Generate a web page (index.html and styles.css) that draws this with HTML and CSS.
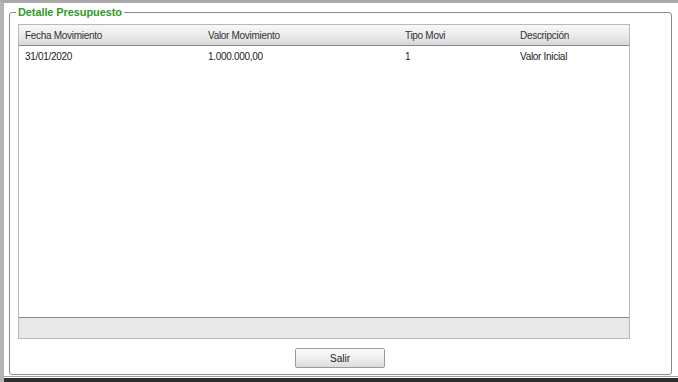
FILE: index.html
```html
<!DOCTYPE html>
<html lang="es">
<head>
<meta charset="utf-8">
<link rel="stylesheet" href="styles.css">
</head>
<body>
<div class="window">
  <fieldset class="panel">
    <legend class="panel-title">Detalle Presupuesto</legend>
    <div class="grid">
      <div class="grid-head">
        <div class="col c1">Fecha Movimiento</div>
        <div class="col c2">Valor Movimiento</div>
        <div class="col c3">Tipo Movi</div>
        <div class="col c4">Descripción</div>
      </div>
      <div class="grid-body">
        <div class="grid-row">
          <div class="col c1">31/01/2020</div>
          <div class="col c2">1.000.000,00</div>
          <div class="col c3">1</div>
          <div class="col c4">Valor Inicial</div>
        </div>
      </div>
      <div class="grid-foot"></div>
    </div>
    <div class="actions">
      <button class="btn" type="button">Salir</button>
    </div>
  </fieldset>
  <div class="window-bottom"></div>
</div>
</body>
</html>
```
FILE: styles.css
```css
html, body {
  margin: 0;
  padding: 0;
  background: #ffffff;
}
body {
  width: 678px;
  height: 382px;
  overflow: hidden;
  font-family: "Liberation Sans", Arial, sans-serif;
}
.window {
  box-sizing: border-box;
  height: 382px;
  border-top: 3px solid #a9a9a9;
  border-left: 4px solid #b4b4b4;
  display: flex;
  flex-direction: column;
}
.panel {
  margin: 2px 6px 0 5px;
  padding: 5px 6px 6px 6px;
  border: 1px solid #8c8c8c;
  border-radius: 3px;
  min-width: 0;
  display: flex;
  flex-direction: column;
}
.panel-title {
  padding: 0 2px;
  height: 14px;
  line-height: 14px;
  font-size: 11px;
  font-weight: bold;
  letter-spacing: -0.1px;
  color: #2f9a25;
}
.grid {
  margin-left: 2px;
  width: 612px;
  height: 315px;
  box-sizing: border-box;
  border: 1px solid #b8b8b8;
  display: flex;
  flex-direction: column;
}
.grid-head {
  height: 21px;
  border-bottom: 1px solid #8a8a8a;
  background: linear-gradient(#f7f7f7, #e9e9e9 60%, #d6d6d6);
  display: flex;
  align-items: center;
  padding-top: 1px;
  box-sizing: border-box;
  color: #333;
}
.grid-body {
  flex: 1;
}
.grid-row {
  height: 21px;
  display: flex;
  align-items: center;
  color: #222;
}
.col {
  font-size: 10px;
  letter-spacing: -0.3px;
  padding-left: 6px;
  box-sizing: border-box;
  white-space: nowrap;
}
.c1 { width: 183px; }
.c2 { width: 197px; }
.c3 { width: 115px; }
.c4 { flex: 1; }
.grid-foot {
  height: 20px;
  border-top: 1px solid #8a8a8a;
  background: #e8e8e8;
}
.actions {
  display: flex;
  justify-content: center;
  padding-top: 9px;
}
.btn {
  width: 90px;
  height: 20px;
  padding: 0;
  margin: 0 0 0 -1px;
  border: 1px solid #9a9a9a;
  border-radius: 2px;
  background: linear-gradient(#fbfbfb, #eeeeee 50%, #dcdcdc);
  font-family: "Liberation Sans", Arial, sans-serif;
  font-size: 10px;
  color: #222;
}
.window-bottom {
  margin-top: 1px;
  flex: 1;
  border-top: 1px solid #a0a0a0;
  border-bottom: 4px solid #2e2e2e;
  background: #fff;
}
```
